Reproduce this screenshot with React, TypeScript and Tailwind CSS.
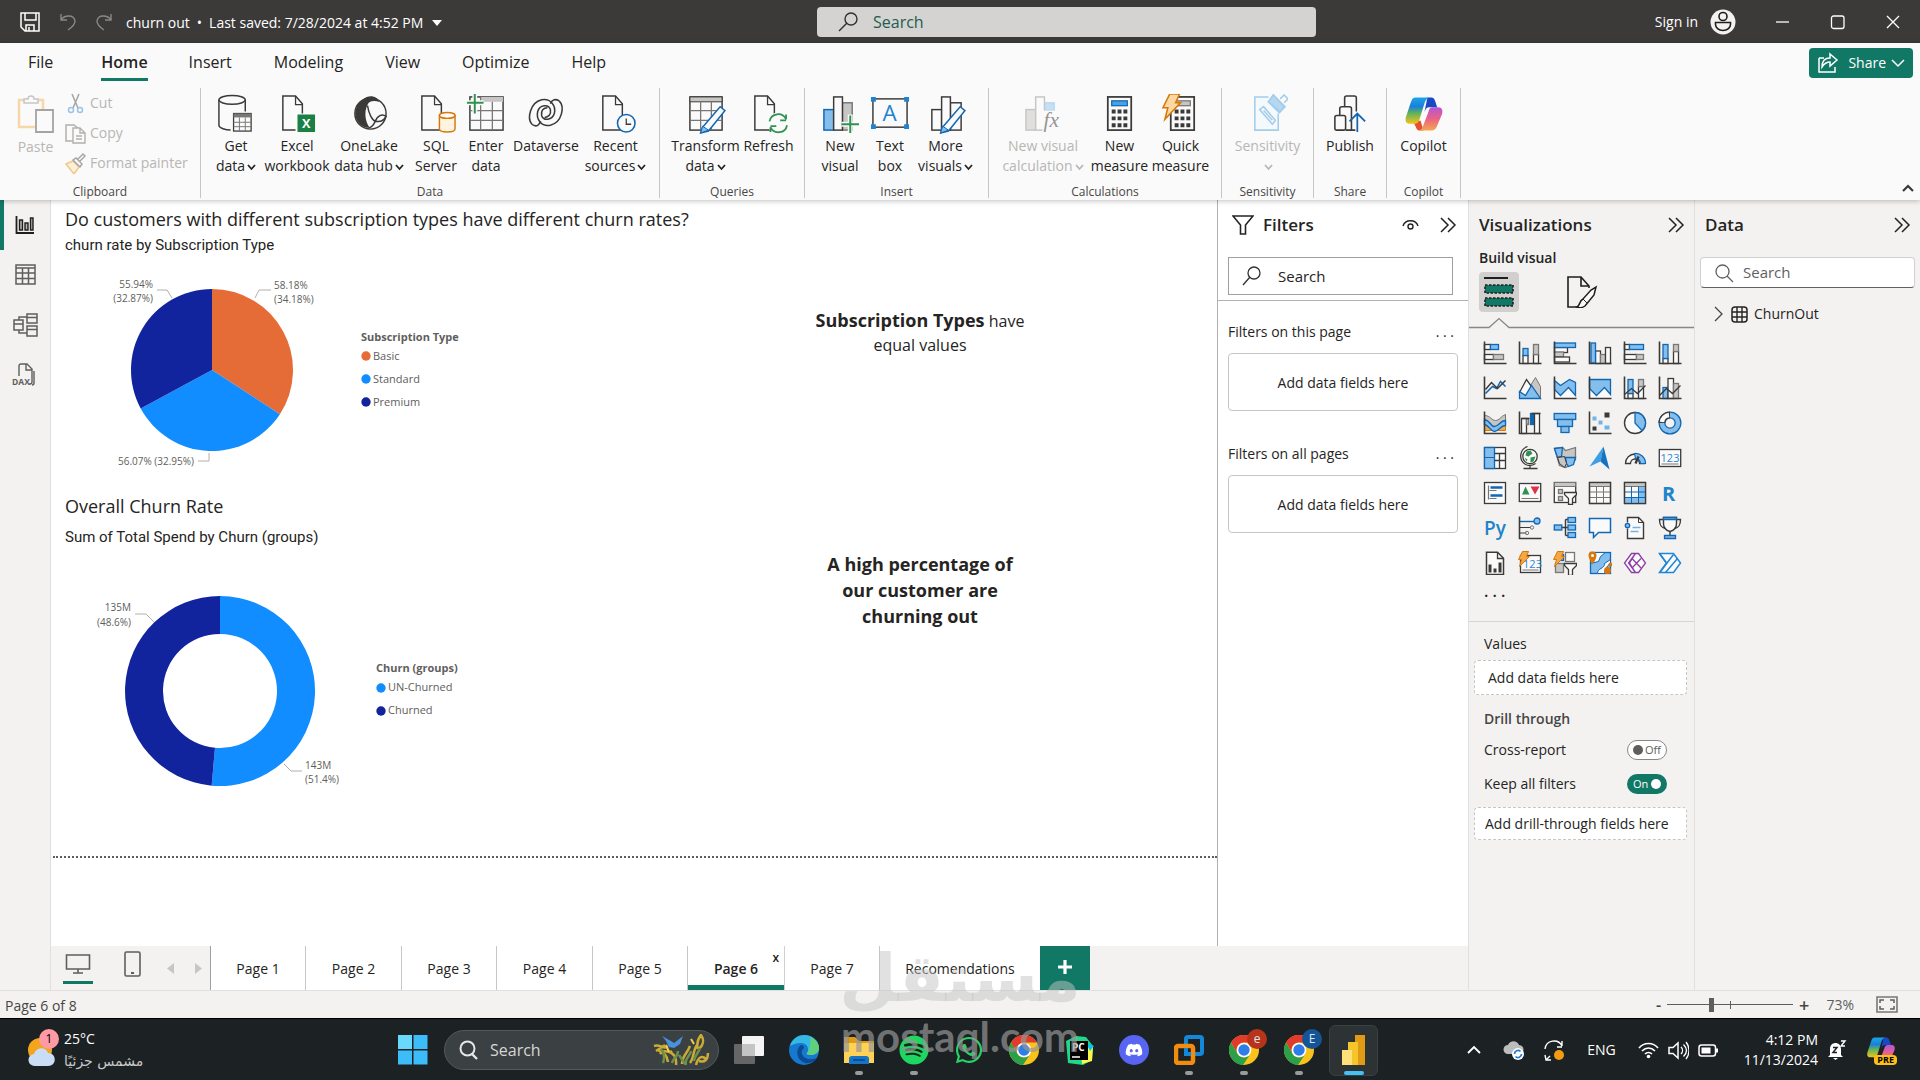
import React from "react";
import { FaWhatsapp, FaDiscord, FaSpotify } from "react-icons/fa";

const D = "#3b3a39";
const B = "#1267b4";
const L = "#83beec";
const G = "#c8c6c4";
const S = "#797775";
const W = "#fafafa";
const GR = "#2f9250";
const OR = "#d8780a";

type IconProps = { size?: number; w?: number; h?: number; box: string; children: React.ReactNode; className?: string };

function Icon({ size = 24, w, h, box, children, className = "" }: IconProps) {
  return (
    <svg width={w ?? size} height={h ?? size} viewBox={box} fill="none" aria-hidden="true" className={`block shrink-0 ${className}`}>
      {children}
    </svg>
  );
}

function Box({ x, y, w, h, f = W, s = D, t = 1.3 }: { x: number; y: number; w: number; h: number; f?: string; s?: string; t?: number }) {
  return <rect x={x} y={y} width={w} height={h} fill={f} stroke={s} strokeWidth={t} />;
}

const axes = <path d="M1 0v22h22" stroke={D} strokeWidth="1.6" />;

/* ---------- Visual gallery ---------- */

const visuals: { name: string; art: React.ReactNode }[] = [
  { name: "Stacked bar chart", art: <><Box x={1} y={3} w={6} h={5} /><Box x={7} y={3} w={8} h={5} f={L} s={B} /><Box x={1} y={13} w={9} h={5} /><Box x={10} y={13} w={10} h={5} f={G} s={S} />{axes}</> },
  { name: "Stacked column chart", art: <><Box x={4.5} y={14} w={5} h={8} /><Box x={4.5} y={7} w={5} h={7} f={L} s={B} /><Box x={15} y={13} w={5} h={9} /><Box x={15} y={3} w={5} h={10} f={G} s={S} />{axes}</> },
  { name: "Clustered bar chart", art: <><Box x={1} y={6} w={13} h={5} /><Box x={1} y={10.5} w={9} h={5} f={G} s={S} /><Box x={1} y={15.5} w={15} h={5} /><Box x={1} y={1.5} w={21} h={4.5} f={L} s={B} />{axes}</> },
  { name: "Clustered column chart", art: <><Box x={7} y={9.5} w={5} h={12.5} /><Box x={12} y={13} w={5} h={9} f={G} s={S} /><Box x={17} y={6} w={5} h={16} /><Box x={2.5} y={1.5} w={4.5} h={20} f={L} s={B} />{axes}</> },
  { name: "100% stacked bar chart", art: <><Box x={1} y={3} w={5} h={5} /><Box x={6} y={3} w={14} h={5} f={L} s={B} /><Box x={1} y={13} w={12} h={5} /><Box x={13} y={13} w={7} h={5} f={G} s={S} />{axes}</> },
  { name: "100% stacked column chart", art: <><Box x={4.5} y={17} w={5} h={5} /><Box x={4.5} y={3} w={5} h={14} f={L} s={B} /><Box x={15} y={10} w={5} h={12} /><Box x={15} y={3} w={5} h={7} f={G} s={S} />{axes}</> },
  { name: "Line chart", art: <><path d="M2 17 9 10l4 2 4-7 5 5" stroke={B} strokeWidth="1.5" /><path d="M2 13 8 6l6 6 8-8" stroke={D} strokeWidth="1.5" />{axes}</> },
  { name: "Area chart", art: <><path d="m12 9 5-8 5 9v12h-6z" fill={G} stroke={S} /><path d="m1 16 7-13 5 7-6 10z" fill={W} stroke={D} strokeWidth="1.3" /><path d="M1 15v7h21L13 9 7 19z" fill={L} stroke={B} strokeWidth="1.3" /></> },
  { name: "Stacked area chart", art: <><path d="M1 22v-9l6 6 8-8 7 8v3z" fill={W} /><path d="M1 4l6 5 9-6 6 3v13l-7-8-8 8-6-6z" fill={L} stroke={B} strokeWidth="1.3" />{axes}</> },
  { name: "100% stacked area chart", art: <><path d="M1 22v-9l6 6 8-8 7 8v3z" fill={W} /><path d="M1 3h21v15l-6-7-8 8-7-7z" fill={L} stroke={B} strokeWidth="1.3" />{axes}</> },
  { name: "Line and stacked column chart", art: <><Box x={4.5} y={17} w={5} h={5} /><Box x={4.5} y={3} w={5} h={14} f={L} s={B} /><Box x={15} y={10} w={5} h={12} /><Box x={15} y={3} w={5} h={7} f={G} s={S} /><path d="m1 18 7-6 6 5 8-8" stroke={D} strokeWidth="1.3" />{axes}</> },
  { name: "Line and clustered column chart", art: <><Box x={4.5} y={11} w={5} h={11} f={L} s={B} /><Box x={9.5} y={2} w={5.5} h={20} /><Box x={15} y={7} w={5} h={15} f={G} s={S} /><path d="m1 19 7-7 6 5 8-8" stroke={D} strokeWidth="1.3" />{axes}</> },
  { name: "Ribbon chart", art: <><path d="M1 13h21v6H1z" fill="#f3a845" stroke={OR} /><path d="M1 4c6 0 7 5 11 5s5-4 10-6v6c-5 1-6 7-10 7S6 9 1 8z" fill={G} stroke={S} /><path d="M1 8c6 1 6 7 10 7s6-6 11-6v5c-5 0-7 6-11 6S6 14 1 13z" fill={L} stroke={B} strokeWidth="1.4" />{axes}</> },
  { name: "Waterfall chart", art: <><Box x={3} y={7} w={5} h={15} /><Box x={8} y={7} w={2} h={6} f={G} s={S} /><Box x={12} y={2} w={3} h={11} f={B} s={B} /><Box x={16} y={2} w={5} h={20} /><path d="M3 7h8M13 2h9" stroke={D} strokeWidth="1.3" />{axes}</> },
  { name: "Funnel", art: <><Box x={0.7} y={2} w={21.5} h={6} f={L} s={B} /><Box x={4} y={8} w={15} h={7} f={L} s={B} /><Box x={7.5} y={15} w={8} h={6} f={L} s={B} /></> },
  { name: "Scatter chart", art: <><path d="M16 1h5v5h-5zM4 15h4v4H4z" fill={D} /><path d="M4 5h4v4H4zM10 9h4v4h-4zM16 14h5v4h-5z" fill="#73b4e8" />{axes}</> },
  { name: "Pie chart", art: <><circle cx="11.5" cy="11.5" r="10.5" fill={W} stroke={D} strokeWidth="1.4" /><path d="M11.5 1a10.5 10.5 0 0 1 7 18.2l-7-7.7z" fill={L} stroke={B} strokeWidth="1.3" /></> },
  { name: "Donut chart", art: <><circle cx="11.5" cy="11.5" r="8" stroke={B} strokeWidth="7" /><circle cx="11.5" cy="11.5" r="8" stroke={L} strokeWidth="4.4" /><path d="M3.5 11.5a8 8 0 0 1 8-8" stroke={D} strokeWidth="7" /><path d="M3.5 10.5a8 8 0 0 1 7-7" stroke={W} strokeWidth="4.4" /></> },
  { name: "Treemap", art: <><Box x={1} y={1} w={21} h={21} /><Box x={1} y={1} w={10} h={21} f={L} s={B} /><path d="M1 11h10" stroke={B} /><path d="M11 7h11M16 7v15M11 14h11" stroke={D} strokeWidth="1.3" /></> },
  { name: "Map", art: <><circle cx="11.5" cy="10" r="7.2" fill={W} stroke={D} strokeWidth="1.3" /><path d="m8 5 4-1 2 3-4 3-3-1zM12 11l5-1-2 5-3 1zM6 11l3 2-1 2z" fill={GR} /><path d="M9 0a10 10 0 0 0-2 18 10 10 0 0 0 10-1M11.5 19v3M5 22h14" stroke={D} strokeWidth="1.3" /></> },
  { name: "Filled map", art: <><path d="m1 2 8-1 3 3 10-3v12l-4 5-6 3-6-2-2-7z" fill={G} stroke={S} strokeWidth="1.3" /><path d="m1 2 8-1-1 9-4 1zM12 11h10l-2 7-5 2-2-3z" fill={L} stroke={B} strokeWidth="1.3" /><path d="m4 11 2 6 5 4 2-4-2-7z" fill={G} stroke={D} /></> },
  { name: "Azure map", art: <><path d="M15 0 1 20l11-5z" fill="#3c9fe6" /><path d="m15 0 6 23-9-8z" fill="#1572c0" /></> },
  { name: "Gauge", art: <><path d="M2 17a9.5 9.5 0 0 1 19 0h-5a4.500 4.500 0 0 0-9 0z" fill={W} stroke={D} strokeWidth="1.3" /><path d="M11 7a10 10 0 0 1 11 10h-5a5 5 0 0 0-5-5z" fill={L} stroke={B} strokeWidth="1.2" /><path d="m15 10-3 7" stroke={D} strokeWidth="2.4" /></> },
  { name: "Card", art: <><Box x={0.8} y={3} w={21.4} h={17} /><path d="M3 17.500h17" stroke={S} /><text x="11.5" y="15" textAnchor="middle" fontSize="11" fill="#2f86d2" fontFamily="Open Sans">123</text></> },
  { name: "Multi-row card", art: <><Box x={1} y={1} w={21} h={21} /><path d="M5 4v14M6 9h7M6 17h7" stroke={S} strokeWidth="1.2" /><path d="M7 6h12M7 14h12" stroke={B} strokeWidth="2.4" /></> },
  { name: "KPI", art: <><Box x={0.8} y={2} w={21.400} h={18} /><path d="M3 17h17" stroke={S} /><path d="m3.500 13 3.500-8 4 8z" fill={GR} /><path d="M12 5h9l-4.500 8z" fill="#dc3545" /></> },
  { name: "Slicer", art: <><Box x={0.8} y={1} w={21.400} h={20} /><path d="M1 1h21v4H1z" fill={G} stroke={S} /><Box x={5} y={8} w={4} h={4} f={G} s={S} /><Box x={5} y={15} w={4} h={4} f={G} s={S} /><path d="M11 11h12v2l-4 4v6h-4v-6l-4-4z" fill={W} stroke={D} strokeWidth="1.3" /></> },
  { name: "Table", art: <><Box x={1} y={1} w={21} h={21} /><path d="M1 1h21v4H1z" fill={G} stroke={S} /><path d="M1 10.500h21M1 16h21M8 5v17M15 5v17" stroke={S} /><Box x={1} y={1} w={21} h={21} f="none" /></> },
  { name: "Matrix", art: <><Box x={1} y={1} w={21} h={21} /><path d="M15 5h7v17H1v-6h14z" fill={L} /><path d="M1 1h21v4H1z" fill={G} stroke={S} /><path d="M1 10.500h21M1 16h21M8 5v17M15 5v17" stroke={B} /><Box x={1} y={1} w={21} h={21} f="none" /></> },
  { name: "R script visual", art: <text x="10" y="19" textAnchor="middle" fontSize="20" fontWeight="700" fill="#2183c9" fontFamily="Open Sans">R</text> },
  { name: "Python visual", art: <text x="11.5" y="18" textAnchor="middle" fontSize="19" fontWeight="600" fill="#2183c9" fontFamily="Open Sans">Py</text> },
  { name: "Key influencers", art: <><path d="M1 5h16" stroke={B} strokeWidth="1.4" /><circle cx="18.500" cy="4.500" r="3" fill={L} stroke={B} strokeWidth="1.3" /><path d="M1 11h11M1 16.500h7" stroke={D} strokeWidth="1.2" /><circle cx="13.500" cy="11" r="1.700" stroke={S} /><circle cx="8.500" cy="16.500" r="1.700" stroke={S} />{axes}</> },
  { name: "Decomposition tree", art: <><path d="M8 11h7M12 3v16M12 3h3M12 19h3" stroke={D} strokeWidth="1.4" /><Box x={0.8} y={8.500} w={7.500} h={5} f={L} s={B} /><Box x={14.500} y={1} w={7.500} h={5} f={L} s={B} /><Box x={14.500} y={8.500} w={7.500} h={5} f={L} s={B} /><Box x={14.500} y={16} w={7.500} h={5} f={L} s={B} /></> },
  { name: "Q&A", art: <path d="M1 2h21v14H10l-5 5v-5H1z" fill={W} stroke={B} strokeWidth="1.5" /> },
  { name: "Smart narrative", art: <><path d="M4 6V1h11l5 5v16H4V12" fill={W} stroke={D} strokeWidth="1.4" /><path d="M15 1v5h5" stroke={D} /><circle cx="4" cy="9" r="2.200" fill={L} stroke={B} strokeWidth="1.3" /><path d="M9 11h8M7 15h8" stroke="#73b4e8" strokeWidth="1.6" /></> },
  { name: "Goals", art: <><path d="M5 1h13v6c0 5-3 7-6.500 8C8 14 5 12 5 7z" fill={W} stroke={D} strokeWidth="1.4" /><path d="M5 3H1c0 5 1 8 6 9M18 3h4c0 5-1 8-6 9M11.500 15v4" stroke={D} strokeWidth="1.4" /><path d="M5 1h13v2H5zM6 19h11v3H6z" fill={L} stroke={B} strokeWidth="1.3" /></> },
  { name: "Paginated report", art: <><path d="M3 0.800h11l6 6V23H3z" fill={W} stroke={D} strokeWidth="1.5" /><path d="M14 1v6h6" stroke={D} strokeWidth="1.300" /><path d="M5 13h3v8H5zM10 17h3v4h-3zM15 11h3v10h-3z" fill={D} /></> },
  { name: "Card (new)", art: <><Box x={2} y={4} w={20} h={17} /><path d="M4 18.500h16" stroke={S} /><text x="14" y="16" textAnchor="middle" fontSize="11" fill="#2f86d2" fontFamily="Open Sans">123</text><path d="M4 0h6L8 5h3L1 15l2-7H0z" fill="#f3a845" stroke={OR} /></> },
  { name: "Slicer (new)", art: <><Box x={12} y={1} w={9} h={9} s={S} /><Box x={2} y={12} w={8} h={9} s={S} f={G} /><Box x={6} y={3} w={4} h={6} s={B} f={L} /><path d="M4 0h6L8 5h3L1 15l2-7H0z" fill="#f3a845" stroke={OR} /><path d="M11 12h12v2l-4 4v6h-4v-6l-4-4z" fill={W} stroke={D} strokeWidth="1.3" /></> },
  { name: "ArcGIS Maps", art: <><Box x={2} y={1} w={20} h={21} f={L} s={B} /><path d="M2 22V12l8-2 2-5 5-4H2zM9 22c0-6 7-4 7-10l6-4v4c-4 2-6 8-6 10z" fill={W} stroke={B} /><path d="M0 4a4 4 0 0 1 8 0c0 3-4 9-4 9S0 7 0 4z" fill={OR} /><circle cx="4" cy="4" r="1.500" fill={W} /><circle cx="19" cy="19" r="3.500" fill={OR} /><circle cx="22" cy="13" r="2" fill={OR} /></> },
  { name: "Power Apps", art: <g stroke="#8d3fa5" strokeWidth="1.300"><path d="M8 2h4l-6 9.500 6 9.500H8l-7-9.500zM15 2h-3L5 11.500 12 21h3l7-9.500z" fill={W} /><path d="m8.500 7 9 9.500M17.500 7l-9 9.500" /></g> },
  { name: "Power Automate", art: <g stroke="#1d86d6" strokeWidth="1.500"><path d="M1 2h14l7 9.500L15 21H1l7-9.500z" fill={W} /><path d="M7 21 19 7M1 2l7 9.500M2 20 15 3" /></g> },
];

/* ---------- Ribbon icons ---------- */

const sheet = (x: number) => <path d={`M${x} 2h13l7 8v27H${x}z`} fill={W} stroke={D} strokeWidth="1.500" />;
const fold = (x: number) => <path d={`M${x + 13} 2v9h7`} stroke={D} strokeWidth="1.300" />;
const pencil = (
  <g>
    <path d="m14 34 18-21 5 4-17 21-8 2z" fill={W} stroke={B} strokeWidth="1.500" />
    <path d="m14 33 6 4-8 3z" fill={L} stroke={B} />
  </g>
);

const art: Record<string, React.ReactNode> = {
  getdata: <><path d="M3 6v26c0 3 7 5 12 5M30 6v12" stroke={D} strokeWidth="1.500" /><ellipse cx="16.500" cy="6" rx="13.500" ry="4.500" fill={W} stroke={D} strokeWidth="1.500" /><Box x={18} y={20} w={18} h={18} /><path d="M18 20h18v4H18z" fill={S} /><path d="M18 29h18M18 33.500h18M24 24v14M30 24v14" stroke={S} /></>,
  excel: <>{sheet(6)}{fold(6)}<rect x="19" y="20" width="20" height="20" fill="#fff" /><rect x="21" y="21" width="18" height="18" fill="#1a8045" /><text x="30" y="35" textAnchor="middle" fontSize="13" fontWeight="700" fill="#fff" fontFamily="Open Sans">X</text></>,
  onelake: <><circle cx="22" cy="20" r="16" stroke={D} strokeWidth="1.500" fill={W} /><path d="M14 6C20 0 29 2 31 8c-7-2-11 0-12 3-4 8-2 18 2 23-8 3-17-9-14-18 1-5 4-8 7-10z" fill={D} /><path d="M19 12c1 8 5 15 8 16 5 1 9-1 11-5-4-3-9-1-11 5-2 4-5 7-8 7" stroke={D} strokeWidth="1.500" /></>,
  sql: <>{sheet(6)}{fold(6)}<path d="M24 22v14c0 2 3 3 8 3s8-1 8-3V22z" fill="#fff4e0" stroke={OR} strokeWidth="1.500" /><ellipse cx="32" cy="22" rx="8" ry="3" fill={W} stroke={OR} strokeWidth="1.500" /></>,
  enter: <><Box x={4} y={3} w={34} h={34} t={1.500} /><path d="M15 3h23v5H15z" fill={G} /><path d="M4 17h34M4 27h34M15 3v34M27 8v29" stroke={S} strokeWidth="1.300" /><path d="M9 0v18M0 9h18" stroke={W} strokeWidth="5" /><path d="M9 0v20M1 9h17" stroke={GR} strokeWidth="2" /></>,
  dataverse: <g stroke={D} strokeWidth="1.600"><path d="M6 31C1 25 4 9 16 6c9-2 15 6 13 14-2 7-11 8-13 2-1-5 2-8 6-8" /><path d="M34 7c6 6 3 22-9 25-9 2-15-6-13-14 2-7 11-8 13-2 1 5-2 8-6 8" /><path d="M6 31c5 4 8 0 9-3M34 7c-5-3-8 0-9 3" /></g>,
  recent: <>{sheet(7)}{fold(7)}<circle cx="31" cy="30" r="9" fill={W} stroke={B} strokeWidth="1.600" /><path d="M31 25v6h5" stroke={D} strokeWidth="1.300" /></>,
  transform: <><Box x={4} y={3} w={33} h={34} t={1.500} /><path d="M4 3h33v5H4z" fill={G} stroke={D} /><path d="M4 17h33M4 27h33M15 8v29M26 8v29" stroke={S} strokeWidth="1.300" /><g transform="translate(3 0)">{pencil}</g></>,
  refresh: <>{sheet(6)}{fold(6)}<circle cx="30" cy="30" r="11" fill={W} /><path d="M21 28a9 9 0 0 1 17-2v-5m0 6h-6M39 32a9 9 0 0 1-17 2v5m0-6h6" stroke={GR} strokeWidth="1.800" /></>,
  newvisual: <><Box x={4} y={16} w={10} h={21} f={L} s={B} t={1.500} /><Box x={23} y={9} w={10} h={28} f={G} s={S} t={1.500} /><Box x={14} y={3} w={9} h={34} t={1.500} /><path d="M31 21v20M22 31h20" stroke={W} strokeWidth="5" /><path d="M31 22v18M22 31h18" stroke={GR} strokeWidth="2" /></>,
  textbox: <><Box x={3} y={5} w={35} h={29} t={1.500} /><path d="M1 3h5v5H1zM35 3h5v5h-5zM1 31h5v5H1zM35 31h5v5h-5z" fill="#1f83d3" /><text x="20" y="28" textAnchor="middle" fontSize="23" fill="#1f83d3" fontFamily="Open Sans">A</text></>,
  more: <><g transform="translate(3 0)"><Box x={3} y={16} w={10} h={21} t={1.500} /><Box x={22} y={9} w={11} h={28} t={1.500} /><Box x={13} y={3} w={9} h={34} t={1.500} />{pencil}</g></>,
  newcalc: <><Box x={3} y={16} w={10} h={21} f="#e1dfdd" s={G} t={1.500} /><Box x={22} y={9} w={10} h={8} f="#c5e0f5" s="#b5d5ee" /><Box x={13} y={3} w={9} h={34} s={G} t={1.500} /><rect x="20" y="17" width="18" height="22" fill={W} /><text x="29" y="34" textAnchor="middle" fontSize="22" fontStyle="italic" fill="#979593" fontFamily="Liberation Serif">fx</text></>,
  measure: <><Box x={8} y={3} w={24} h={34} t={1.800} /><Box x={12} y={7} w={16} h={5} f="#4ba0e4" s={B} /><path d="M12 16h4v4h-4zM18 16h4v4h-4zM24 16h4v4h-4zM12 23h4v4h-4zM18 23h4v4h-4zM24 23h4v4h-4zM12 30h4v4h-4zM18 30h4v4h-4zM24 30h4v4h-4z" fill={D} /></>,
  quick: <><Box x={10} y={3} w={24} h={34} t={1.800} /><Box x={14} y={7} w={16} h={5} f={G} s={S} /><path d="M14 16h4v4h-4zM20 16h4v4h-4zM26 16h4v4h-4zM14 23h4v4h-4zM20 23h4v4h-4zM26 23h4v4h-4zM14 30h4v4h-4zM20 30h4v4h-4zM26 30h4v4h-4z" fill={D} /><path d="M9 0h10l-4 9h5L4 26l3-12H2z" fill="#fbd9a0" stroke={OR} strokeWidth="1.600" /></>,
  sensitivity: <g stroke="#a5cdea" strokeWidth="1.600"><path d="M31 20v17H7V3h14" fill="#f3f9fd" /><path d="m12 16 4-3 12 14-3 4zM16 17l9 10M21 8l5-7 12 12-6 6z" fill={W} /><path d="m26 1 11 12-4 5L21 8z" fill="#b5d8f2" /><path d="m33 5 4-4 4 4-4 4" fill={W} /></g>,
  publish: <><g stroke={D} strokeWidth="1.600"><rect x="5" y="22" width="11" height="15" rx="2" fill={W} /><path d="M10 22v-7q0-2 2-2h8q2 0 2 2v22M15 13V4q0-2 2-2h8q2 0 2 2v14M16 37h10" /></g><path d="M28 39V21M20 28l8-8 8 8" stroke={B} strokeWidth="1.800" /></>,
};

function CopilotArt({ id }: { id: string }) {
  return (
    <>
      <defs>
        <linearGradient id={`${id}a`} x1="0" y1="0" x2="0" y2="1"><stop offset="0" stopColor="#1ca4ec" /><stop offset=".35" stopColor="#1b7fd8" /><stop offset=".6" stopColor="#5fb45a" /><stop offset="1" stopColor="#f6c21c" /></linearGradient>
        <linearGradient id={`${id}b`} x1="0" y1="0" x2="0" y2="1"><stop offset="0" stopColor="#b455d6" /><stop offset=".5" stopColor="#ea6385" /><stop offset="1" stopColor="#f3a74e" /></linearGradient>
      </defs>
      <path d="M24 3h4c2 0 3 1 4 4l2 6h-8c-3 0-4 2-5 5z" fill="#1a49c4" />
      <path d="M9 27h8l3 10h-3c-3 0-4-1-5-4z" fill="#e6502f" />
      <path d="M12 3h14c-3 1-4 3-5 6l-5 16c-1 4-3 5-6 5H6c-4 0-5-3-4-7L7 8c1-3 2-5 5-5z" fill={`url(#${id}a)`} />
      <path d="M30 13h5c4 0 5 3 4 7l-5 12c-1 3-3 5-6 5H15c3-1 4-3 5-6l5-13c1-4 2-5 5-5z" fill={`url(#${id}b)`} />
    </>
  );
}

function Caret({ className = "" }: { className?: string }) {
  return (
    <svg width="9" height="8" viewBox="0 0 9 8" fill="none" className={`ml-0.5 inline-block ${className}`} aria-hidden="true">
      <path d="m1 2 3.500 4L8 2" stroke="currentColor" strokeWidth="1.800" />
    </svg>
  );
}

type Tool = { icon: string; l1: string; l2?: string; caret?: boolean; width: string; off?: boolean };
const groups: { label: string; pad: string; tools: Tool[] }[] = [
  {
    label: "Data", pad: "pl-[7px] pr-[12px]", tools: [
      { icon: "getdata", l1: "Get", l2: "data", caret: true, width: "w-[56px]" },
      { icon: "excel", l1: "Excel", l2: "workbook", width: "w-[66px]" },
      { icon: "onelake", l1: "OneLake", l2: "data hub", caret: true, width: "w-[78px]" },
      { icon: "sql", l1: "SQL", l2: "Server", width: "w-[56px]" },
      { icon: "enter", l1: "Enter", l2: "data", width: "w-[44px]" },
      { icon: "dataverse", l1: "Dataverse", width: "w-[76px]" },
      { icon: "recent", l1: "Recent", l2: "sources", caret: true, width: "w-[63px]" },
    ],
  },
  {
    label: "Queries", pad: "pl-[11px] pr-[7px]", tools: [
      { icon: "transform", l1: "Transform", l2: "data", caret: true, width: "w-[69px]" },
      { icon: "refresh", l1: "Refresh", width: "w-[57px]" },
    ],
  },
  {
    label: "Insert", pad: "pl-[10px] pr-[12px]", tools: [
      { icon: "newvisual", l1: "New", l2: "visual", width: "w-[50px]" },
      { icon: "textbox", l1: "Text", l2: "box", width: "w-[50px]" },
      { icon: "more", l1: "More", l2: "visuals", caret: true, width: "w-[61px]" },
    ],
  },
  {
    label: "Calculations", pad: "pl-[8px] pr-[10px]", tools: [
      { icon: "newcalc", l1: "New visual", l2: "calculation", caret: true, width: "w-[92px]", off: true },
      { icon: "measure", l1: "New", l2: "measure", width: "w-[61px]" },
      { icon: "quick", l1: "Quick", l2: "measure", width: "w-[61px]" },
    ],
  },
  { label: "Sensitivity", pad: "px-[8px]", tools: [{ icon: "sensitivity", l1: "Sensitivity", l2: "", caret: true, width: "w-[75px]", off: true }] },
  { label: "Share", pad: "px-[8px]", tools: [{ icon: "publish", l1: "Publish", width: "w-[56px]" }] },
  { label: "Copilot", pad: "px-[8px]", tools: [{ icon: "copilot", l1: "Copilot", width: "w-[57px]" }] },
];

function GroupLine() {
  return <div className="mt-1 mb-0.5 w-px shrink-0 bg-[#c8c6c4]" />;
}

function GroupLabel({ children }: { children: React.ReactNode }) {
  return <div className="mt-[6px] text-center text-xs leading-4 text-[#484644]">{children}</div>;
}

function TitleBar() {
  return (
    <header className="flex h-[43px] shrink-0 items-center bg-[#3b3a39] text-white">
      <div className="flex w-[817px] shrink items-center pl-[19px]">
        <button aria-label="Save">
          <Icon size={22} box="0 0 22 22"><path d="M2 2h18v18H6l-4-4zM6 2v7h11V2M7 20v-6h8v6M10 16v4" stroke="#fff" strokeWidth="1.500" /></Icon>
        </button>
        <button aria-label="Undo" className="ml-[18px]">
          <Icon size={18} box="0 0 18 18"><path d="M2 1v6h6M2 7c3-5 13-6 14 1 0 4-4 7-7 9" stroke="#8a8886" strokeWidth="1.400" /></Icon>
        </button>
        <button aria-label="Redo" className="ml-[18px]">
          <Icon size={18} box="0 0 18 18"><path d="M16 1v6h-6M16 7C13 2 3 1 2 8c0 4 4 7 7 9" stroke="#8a8886" strokeWidth="1.400" /></Icon>
        </button>
        <button className="ml-[13px] flex items-center gap-[7px] pt-[3px] text-sm whitespace-nowrap">
          <span>churn out</span><span>•</span><span>Last saved: 7/28/2024 at 4:52 PM</span>
          <Icon w={10} h={6} box="0 0 10 6" className="ml-[2px]"><path d="M0 0h10L5 6z" fill="#fff" /></Icon>
        </button>
      </div>
      <label className="flex h-[30px] w-[26%] items-center rounded-sm bg-[#d4d3d1] pl-[20px]">
        <Icon size={22} box="0 0 22 22"><circle cx="14" cy="8" r="6" stroke="#323130" strokeWidth="1.400" /><path d="m10 12-8 8" stroke="#323130" strokeWidth="1.400" /></Icon>
        <input aria-label="Search" placeholder="Search" className="ml-[14px] min-w-0 flex-1 bg-transparent text-base text-[#245c4d] outline-none placeholder:text-[#245c4d]" />
      </label>
      <div className="flex flex-1 items-center justify-end pr-[19px]">
        <button className="flex items-center gap-[12px] text-sm">
          Sign in
          <Icon size={26} box="0 0 26 26"><circle cx="13" cy="13" r="12.500" fill="#f3f2f1" /><circle cx="13" cy="7.500" r="4" stroke="#201f1e" strokeWidth="1.600" /><path d="M5.500 13.500h15v2c0 3-3 6-7.500 6s-7.500-3-7.500-6z" stroke="#201f1e" strokeWidth="1.600" /></Icon>
        </button>
        <button aria-label="Minimize" className="ml-[39px]"><Icon size={16} box="0 0 16 16"><path d="M1 8h13" stroke="#fff" strokeWidth="1.300" /></Icon></button>
        <button aria-label="Restore" className="ml-[39px]"><Icon size={16} box="0 0 16 16"><rect x="1.500" y="2" width="12.500" height="12.500" rx="2" stroke="#fff" strokeWidth="1.300" /></Icon></button>
        <button aria-label="Close" className="ml-[39px]"><Icon size={16} box="0 0 16 16"><path d="m2 2 12 12M14 2 2 14" stroke="#fff" strokeWidth="1.300" /></Icon></button>
      </div>
    </header>
  );
}

function Ribbon() {
  const menu = ["File", "Home", "Insert", "Modeling", "View", "Optimize", "Help"];
  return (
    <section className="relative z-10 shrink-0 bg-[#fafafa] shadow-[0_1px_5px_rgba(0,0,0,0.25)]">
      <div className="flex h-[41px] items-start justify-between pr-[7px] pl-[28px]">
        <nav className="flex">
          {menu.map((m) => (
            <button
              key={m}
              className={
                m === "Home"
                  ? "mr-[41px] h-[38px] border-b-[3px] border-[#117865] pt-[3px] text-base font-semibold text-[#252423]"
                  : m === "File"
                  ? "mr-[48px] h-[38px] text-base text-[#252423]"
                  : "mr-[42px] h-[38px] text-base text-[#252423]"
              }
            >
              {m}
            </button>
          ))}
        </nav>
        <button className="mt-[5px] flex h-[30px] items-center rounded bg-[#117865] px-[8px] text-sm text-white">
          <Icon size={22} box="0 0 22 22"><path d="M2 6v14h16v-5M2 6h5" stroke="#fff" strokeWidth="1.500" /><path d="m13 2 7 6-7 6v-4c-4 0-6 2-8 5 0-6 3-9 8-9z" stroke="#fff" strokeWidth="1.500" /></Icon>
          <span className="ml-[9px]">Share</span>
          <Icon w={14} h={14} box="0 0 14 14" className="ml-[5px]"><path d="m1 4 6 6 6-6" stroke="#fff" strokeWidth="1.500" /></Icon>
        </button>
      </div>
      <div className="flex">
        <div className="flex w-[200px] shrink-0 flex-col pt-[10px]">
          <div className="flex h-[84px] text-sm text-[#b8b6b4]">
            <button className="flex w-[57px] shrink-0 flex-col items-center pl-[14px]" disabled>
              <Icon size={40} box="0 0 40 40"><path d="M3 6h24v27H3z" fill={W} stroke="#f6d7a8" strokeWidth="2.500" /><path d="M8 9V5h4c0-4 6-4 6 0h4v4H8z" fill={W} stroke={G} strokeWidth="1.500" /><path d="M20 16h17v22H20z" fill={W} stroke="#a6a4a2" strokeWidth="1.800" /></Icon>
              <span className="mt-0.5 leading-[21px]">Paste</span>
            </button>
            <div className="ml-[8px] flex flex-col gap-[12px]">
              <button className="flex h-[18px] items-center gap-[4px]" disabled>
                <Icon size={21} box="0 0 21 21"><path d="m7 1 6 14M14 1 8 15" stroke="#a6a4a2" strokeWidth="1.500" /><circle cx="6" cy="17" r="2.500" stroke="#9bc3e6" strokeWidth="1.500" /><circle cx="15" cy="17" r="2.500" stroke="#9bc3e6" strokeWidth="1.500" /></Icon>Cut
              </button>
              <button className="flex h-[18px] items-center gap-[4px]" disabled>
                <Icon size={21} box="0 0 21 21"><path d="M8 18H1V2h8l4 3" stroke="#b3b0ad" strokeWidth="1.500" /><path d="M8 5h7l5 5v10H8zM15 5v5h5M11 13h6M11 16h6" fill={W} stroke="#b3b0ad" strokeWidth="1.400" /></Icon>Copy
              </button>
              <button className="flex h-[18px] items-center gap-[4px] whitespace-nowrap" disabled>
                <Icon size={21} box="0 0 21 21"><path d="m1 11 7-3 6 6-5 7z" fill="#fdf0d9" stroke="#efc88e" strokeWidth="1.500" /><path d="m8 7 3-2 6 6-2 3zM13 6l5-5 2 2-5 5" fill={W} stroke="#a6a4a2" strokeWidth="1.400" /></Icon>Format painter
              </button>
            </div>
          </div>
          <GroupLabel>Clipboard</GroupLabel>
        </div>
        {groups.map((g) => (
          <React.Fragment key={g.label}>
            <GroupLine />
            <div className="flex shrink-0 flex-col pt-[10px]">
              <div className={`flex h-[84px] ${g.pad}`}>
                {g.tools.map((t) => (
                  <button
                    key={t.icon}
                    disabled={t.off}
                    className={`${t.width} flex flex-col items-center text-sm leading-5 whitespace-nowrap ${t.off ? "text-[#b8b6b4]" : "text-[#252423]"}`}
                  >
                    <Icon size={40} box={t.icon === "copilot" ? "0 0 41 40" : "0 0 41 41"}>
                      {t.icon === "copilot" ? <CopilotArt id="rb" /> : art[t.icon]}
                    </Icon>
                    <span className="mt-0.5">{t.l1}</span>
                    {(t.l2 !== undefined || t.caret) && <span>{t.l2}{t.caret && <Caret />}</span>}
                  </button>
                ))}
              </div>
              <GroupLabel>{g.label}</GroupLabel>
            </div>
          </React.Fragment>
        ))}
        <GroupLine />
        <button aria-label="Collapse ribbon" className="mr-[5px] ml-auto self-end pb-[7px]">
          <Icon w={14} h={9} box="0 0 14 9"><path d="m2 7 5-5 5 5" stroke={D} strokeWidth="2.200" /></Icon>
        </button>
      </div>
    </section>
  );
}

function Rail() {
  const g = "#605e5c";
  return (
    <nav className="flex w-[51px] shrink-0 flex-col border-r border-[#e1dfdd] bg-[#f3f2f1]">
      <button aria-label="Report view" className="flex h-[50px] items-center border-l-4 border-[#117865] pl-[11px]">
        <Icon size={20} box="0 0 20 20"><path d="M1.500 1v17H19" stroke="#201f1e" strokeWidth="1.800" /><path d="M4.500 5h3v10h-3zM10 8h3v7h-3zM15.500 3h2.500v12h-2.500z" fill="#b3b0ad" stroke="#201f1e" strokeWidth="1.400" /></Icon>
      </button>
      <button aria-label="Table view" className="flex h-[48px] items-center pl-[15px]">
        <Icon size={21} box="0 0 21 21"><path d="M1 1h19v19H1zM1 4h19M1 9h19M1 14.500h19M7.500 4v16M13.500 4v16" stroke={g} strokeWidth="1.500" /></Icon>
      </button>
      <button aria-label="Model view" className="flex h-[52px] items-center pl-[13px]">
        <Icon size={25} box="0 0 25 25"><path d="M1 8h9v10H1zM1 12h9M14 2h10v9H14zM14 5.500h10M14 14h10v10H14zM14 17.500h10M6 8V5h8M6 18v3h8" stroke={g} strokeWidth="1.500" /></Icon>
      </button>
      <button aria-label="DAX query view" className="flex h-[50px] items-center pl-[12px]">
        <Icon size={24} box="0 0 24 24"><path d="M7 13V3q0-2 2-2h6l5 5v13q0 2-2 2h-1M14 1v6h6M22 8v12q0 2-2 2" stroke={g} strokeWidth="1.400" /><text x="0" y="22" fontSize="8.500" fontWeight="700" fill={g} fontFamily="Open Sans">DAX</text></Icon>
      </button>
    </nav>
  );
}

/* ---------- Report charts ---------- */

function point(fraction: number, r: number) {
  const a = fraction * 2 * Math.PI;
  return `${(r * Math.sin(a)).toFixed(2)} ${(-r * Math.cos(a)).toFixed(2)}`;
}

function slice(from: number, to: number, outer: number, inner: number) {
  const big = to - from > 0.5 ? 1 : 0;
  return `M${point(from, outer)}A${outer} ${outer} 0 ${big} 1 ${point(to, outer)}L${point(to, inner)}A${inner} ${inner} 0 ${big} 0 ${point(from, inner)}Z`;
}

function Legend({ title, items }: { title: string; items: [string, string][] }) {
  return (
    <div className="text-[11px] text-[#605e5c]">
      <div className="leading-4 font-bold">{title}</div>
      <ul>
        {items.map(([name, color]) => (
          <li key={name} className="flex h-[23px] items-center gap-[2px]">
            <Icon size={10} box="0 0 10 10"><circle cx="5" cy="5" r="4.700" fill={color} /></Icon>
            {name}
          </li>
        ))}
      </ul>
    </div>
  );
}

function Report() {
  return (
    <main className="min-w-0 flex-1 overflow-hidden bg-white pt-[5px] pl-[2px]">
      <section>
        <h2 className="pl-[12px] text-lg leading-7 whitespace-nowrap text-[#252423]">Do customers with different subscription types have different churn rates?</h2>
        <h3 className="pl-[12px] font-['Roboto',sans-serif] text-[15px] leading-6 text-[#252423]">churn rate by Subscription Type</h3>
        <div className="grid grid-cols-2">
          <div className="flex items-center gap-[36px] pt-[9px] pl-[12px]">
            <svg width="260" height="210" viewBox="-147 -104 260 210" role="img" aria-label="Churn rate by subscription type" className="shrink-0" fontSize="10" fill="#605e5c">
              <path d={slice(0, 0.3418, 81, 0)} fill="#e66c37" />
              <path d={slice(0.3418, 0.6713, 81, 0)} fill="#118dff" />
              <path d={slice(0.6713, 1, 81, 0)} fill="#12239e" />
              <path d="M-55-80h10l5 8M43-72l4-8h12M-14 91h11v-8" fill="none" stroke="#b3b0ad" />
              <text x="-59" y="-82" textAnchor="end">55.94%</text>
              <text x="-59" y="-68" textAnchor="end">(32.87%)</text>
              <text x="62" y="-81">58.18%</text>
              <text x="62" y="-67">(34.18%)</text>
              <text x="-18" y="95" textAnchor="end">56.07% (32.95%)</text>
            </svg>
            <Legend title="Subscription Type" items={[["Basic", "#e66c37"], ["Standard", "#118dff"], ["Premium", "#12239e"]]} />
          </div>
          <p className="mt-[51px] pr-[12px] text-center text-base leading-6 text-[#252423]">
            <strong className="text-lg leading-6 font-bold">Subscription Types</strong> have<br />equal values
          </p>
        </div>
      </section>
      <section className="mt-4">
        <h2 className="pl-[12px] text-lg leading-7 text-[#252423]">Overall Churn Rate</h2>
        <h3 className="mt-[6px] pl-[12px] font-['Roboto',sans-serif] text-[15px] leading-[22px] text-[#252423]">Sum of Total Spend by Churn (groups)</h3>
        <div className="grid grid-cols-2">
          <div className="flex items-center gap-[31px] pt-[43px] pl-[12px]">
            <svg width="280" height="200" viewBox="-155 -100 280 200" role="img" aria-label="Sum of total spend by churn" className="shrink-0" fontSize="10" fill="#605e5c">
              <path d={slice(0, 0.514, 95, 57)} fill="#118dff" />
              <path d={slice(0.514, 1, 95, 57)} fill="#12239e" />
              <path d="M-85-77h11l8 8M64 73l7 7h11" fill="none" stroke="#b3b0ad" />
              <text x="-89" y="-80" textAnchor="end">135M</text>
              <text x="-89" y="-65" textAnchor="end">(48.6%)</text>
              <text x="85" y="78">143M</text>
              <text x="85" y="92">(51.4%)</text>
            </svg>
            <Legend title="Churn (groups)" items={[["UN-Churned", "#118dff"], ["Churned", "#12239e"]]} />
          </div>
          <p className="mt-[3px] pr-[12px] text-center text-lg leading-[26px] font-bold text-[#252423]">
            A high percentage of<br />our customer are<br />churning out
          </p>
        </div>
      </section>
      <div className="mt-[65px] border-t-2 border-dotted border-[#605e5c]" />
    </main>
  );
}

function Chevrons() {
  return <Icon w={18} h={18} box="0 0 18 18"><path d="m2 2 7 7-7 7M9 2l7 7-7 7" stroke="#252423" strokeWidth="1.500" /></Icon>;
}

function FilterGroup({ title }: { title: string }) {
  return (
    <div>
      <div className="flex items-center justify-between pr-[14px] text-sm leading-5 text-[#252423]">
        <h3>{title}</h3>
        <button aria-label={`${title} options`}>. . .</button>
      </div>
      <div className="mt-[11px] mr-[10px] flex h-[58px] items-center justify-center rounded-sm border border-[#c8c6c4] pt-[2px] text-sm text-[#252423]">Add data fields here</div>
    </div>
  );
}

function Filters() {
  return (
    <aside className="w-[251px] shrink-0 border-l border-[#b3b0ad] bg-white">
      <div className="flex h-[101px] flex-col border-b border-[#b3b0ad] pt-[11px] pl-[10px]">
        <div className="flex h-[28px] items-center pr-[11px] pl-[4px]">
          <Icon size={22} box="0 0 22 22"><path d="M1 2h20l-7.500 9v9h-5v-9z" stroke="#252423" strokeWidth="1.600" /></Icon>
          <h2 className="ml-[9px] text-[17px] font-semibold text-[#252423]">Filters</h2>
          <button aria-label="Show or hide the filter pane" className="mr-[20px] ml-auto"><Icon size={17} box="0 0 17 17"><path d="M1 9c2-7 13-7 15 0" stroke="#252423" strokeWidth="1.400" /><circle cx="8.500" cy="9.500" r="2.500" stroke="#252423" strokeWidth="1.400" /></Icon></button>
          <button aria-label="Collapse filters"><Chevrons /></button>
        </div>
        <label className="mt-[18px] mr-[15px] flex h-[38px] items-center border border-[#a19f9d] pl-[12px]">
          <Icon size={22} box="0 0 22 22"><circle cx="13" cy="8" r="6" stroke="#323130" strokeWidth="1.300" /><path d="m9 12-7 8" stroke="#323130" strokeWidth="1.300" /></Icon>
          <input aria-label="Search filters" placeholder="Search" className="ml-[15px] w-full min-w-0 bg-transparent text-[15px] text-[#252423] outline-none placeholder:text-[#252423]" />
        </label>
      </div>
      <div className="flex flex-col gap-[33px] pt-[21px] pl-[10px]">
        <FilterGroup title="Filters on this page" />
        <FilterGroup title="Filters on all pages" />
      </div>
    </aside>
  );
}

function Toggle({ label, on }: { label: string; on: boolean }) {
  return (
    <label className="flex h-[34px] items-center justify-between pr-[22px] pl-[10px] text-sm text-[#252423]">
      {label}
      <input type="checkbox" role="switch" defaultChecked={on} className="sr-only" />
      {on ? (
        <span className="flex h-5 w-10 items-center justify-between rounded-full bg-[#117865] pr-[6px] pl-[6px] text-[11px] leading-5 text-white">On<i className="size-[10px] rounded-full bg-white" /></span>
      ) : (
        <span className="flex h-5 w-10 items-center justify-between rounded-full border border-[#8a8886] bg-white pr-[5px] pl-[5px] text-[11px] leading-5 text-[#605e5c]"><i className="size-[10px] rounded-full bg-[#605e5c]" />Off</span>
      )}
    </label>
  );
}

function Visualizations() {
  return (
    <aside className="w-[226px] shrink-0 border-l border-[#e1dfdd] bg-[#f3f2f1] text-[#252423]">
      <div className="flex items-center justify-between pt-[11px] pr-[9px] pl-[10px]">
        <h2 className="text-[17px] leading-7 font-semibold">Visualizations</h2>
        <button aria-label="Collapse visualizations"><Chevrons /></button>
      </div>
      <h3 className="mt-[9px] pl-[10px] text-sm leading-5 font-semibold">Build visual</h3>
      <div className="mt-[4px] flex pl-[10px]">
        <button aria-label="Build visual" className="flex size-10 items-center justify-center rounded-sm bg-[#d2d0ce]">
          <Icon size={32} box="0 0 32 32"><path d="M1 2h24" stroke="#201f1e" strokeWidth="2" /><path d="M2 9h28v8H2zM2 22h28v8H2z" fill="#117865" /><path d="M2 9h28v8H2zM2 22h28v8H2z" stroke="#201f1e" strokeWidth="1.600" strokeDasharray="2.500 1.500" /></Icon>
        </button>
        <button aria-label="Format visual" className="ml-[43px] flex size-10 items-center justify-center">
          <Icon size={32} box="0 0 32 32"><path d="M11 31H2V1h13l8 9v2M15 1v9h7" stroke="#201f1e" strokeWidth="1.600" /><path d="m30 11-2 8-9 11c-3 2-6 2-8 1 3-1 2-6 6-8l8-9z" fill={W} stroke="#201f1e" strokeWidth="1.500" /><path d="m17 23 4 4" stroke="#201f1e" /></Icon>
        </button>
      </div>
      <svg width="225" height="12" viewBox="0 0 225 12" fill="none" className="mt-[5px] block" aria-hidden="true"><path d="M0 10.500h20l10-9 10 9h185" stroke="#8a8886" strokeWidth="1.300" /></svg>
      <div className="mt-[6px] grid grid-cols-[repeat(6,35px)] pl-[8px]">
        {visuals.map((v) => (
          <button key={v.name} aria-label={v.name} title={v.name} className="flex h-[35px] items-center justify-center">
            <Icon size={24} box="-0.500 -0.500 24 24">{v.art}</Icon>
          </button>
        ))}
      </div>
      <button aria-label="More visuals" className="mt-[1px] block h-[20px] pl-[15px] text-base leading-4 font-semibold">. . .</button>
      <div className="mt-[20px] border-t border-[#d8d6d4] px-[5px] pt-[12px]">
        <h4 className="pl-[10px] text-sm leading-5">Values</h4>
        <div className="mt-[6px] mr-[2px] flex h-[35px] items-center rounded-sm border border-dashed border-[#c8c6c4] bg-white pl-[13px] text-sm">Add data fields here</div>
        <h4 className="mt-[14px] mb-[4px] pl-[10px] text-sm leading-5 font-semibold text-[#484644]">Drill through</h4>
        <Toggle label="Cross-report" on={false} />
        <Toggle label="Keep all filters" on />
        <div className="mt-[6px] mr-[2px] flex h-[33px] items-center rounded-sm border border-dashed border-[#c8c6c4] bg-white pl-[10px] text-sm whitespace-nowrap">Add drill-through fields here</div>
      </div>
    </aside>
  );
}

function DataPane() {
  return (
    <aside className="w-[226px] shrink-0 border-l border-[#e1dfdd] bg-[#f3f2f1] text-[#252423]">
      <div className="flex items-center justify-between pt-[11px] pr-[9px] pl-[10px]">
        <h2 className="text-[17px] leading-7 font-semibold">Data</h2>
        <button aria-label="Collapse data"><Chevrons /></button>
      </div>
      <label className="mx-[5px] mt-[18px] flex h-[31px] items-center rounded border border-[#d1d1d1] border-b-[#616161] bg-white pl-[13px]">
        <Icon size={20} box="0 0 20 20"><circle cx="8.500" cy="8.500" r="6.500" stroke="#616161" strokeWidth="1.300" /><path d="m13 13 6 6" stroke="#616161" strokeWidth="1.300" /></Icon>
        <input aria-label="Search data" placeholder="Search" className="ml-[9px] w-full min-w-0 bg-transparent text-[15px] outline-none placeholder:text-[#616161]" />
      </label>
      <button className="mt-[14px] ml-[19px] flex h-[24px] items-center text-sm">
        <Icon w={10} h={16} box="0 0 10 16"><path d="m1 1 7 7-7 7" stroke="#484644" strokeWidth="1.300" /></Icon>
        <Icon size={17} box="0 0 17 17" className="mr-[6px] ml-[7px]"><rect x="1" y="1" width="15" height="15" rx="3" stroke="#252423" strokeWidth="1.500" /><path d="M1 6h15M1 11h15M6 1v15M11 1v15" stroke="#252423" strokeWidth="1.400" /></Icon>
        ChurnOut
      </button>
    </aside>
  );
}

function PageTabs() {
  const pages = ["Page 1", "Page 2", "Page 3", "Page 4", "Page 5", "Page 6", "Page 7"];
  return (
    <div className="flex h-[44px] shrink-0 bg-[#f3f2f1] text-sm text-[#252423]">
      <div className="flex w-[160px] shrink-0 border-r border-[#a19f9d]">
        <button aria-label="Desktop layout" className="ml-[12px] flex h-[38px] w-[30px] flex-col items-center border-b-[3px] border-[#117865] pt-[8px]">
          <Icon w={26} h={20} box="0 0 26 20"><path d="M1.500 1h23v14h-23zM13 15v4M8 19h10" stroke="#605e5c" strokeWidth="1.600" /></Icon>
        </button>
        <button aria-label="Mobile layout" className="ml-[31px] flex h-[38px] pt-[5px]">
          <Icon w={17} h={27} box="0 0 17 27"><rect x="1" y="1" width="15" height="24" rx="1.500" stroke="#605e5c" strokeWidth="1.600" /><path d="M7 22h3" stroke="#605e5c" strokeWidth="2" /></Icon>
        </button>
        <button aria-label="Previous page" className="ml-[26px]"><Icon w={7} h={11} box="0 0 7 11"><path d="M7 0v11L0 5.500z" fill="#c8c6c4" /></Icon></button>
        <button aria-label="Next page" className="ml-[21px]"><Icon w={7} h={11} box="0 0 7 11"><path d="M0 0v11l7-5.500z" fill="#c8c6c4" /></Icon></button>
      </div>
      {pages.map((p) =>
        p === "Page 6" ? (
          <div key={p} className="relative flex border-r border-[#d2d0ce] bg-white">
            <button className="w-[96px] border-b-[5px] border-[#117865] pt-[6px] font-semibold">{p}</button>
            <button aria-label="Delete page" className="absolute top-[2px] right-[5px] text-xs leading-5 font-semibold">x</button>
          </div>
        ) : (
          <button key={p} className="w-[95px] border-r border-[#c8c6c4] bg-white pt-[2px] odd:w-[96px]">{p}</button>
        )
      )}
      <button className="w-[160px] bg-white pt-[2px]">Recomendations</button>
      <button aria-label="New page" className="flex w-[50px] items-center justify-center bg-[#117865] pb-[3px]">
        <Icon size={14} box="0 0 14 14"><path d="M7 0v14M0 7h14" stroke="#fff" strokeWidth="3.200" /></Icon>
      </button>
    </div>
  );
}

function StatusBar() {
  return (
    <footer className="flex h-[28px] shrink-0 items-center border-t border-[#e1dfdd] bg-[#f3f2f1] pl-[5px] text-sm text-[#484644]">
      <span className="pt-[3px]">Page 6 of 8</span>
      <button aria-label="Zoom out" className="ml-auto text-base leading-5 font-semibold">-</button>
      <input
        type="range"
        min={10}
        max={190}
        defaultValue={72}
        aria-label="Zoom"
        className="mx-[6px] h-[15px] w-[126px] appearance-none bg-[linear-gradient(#605e5c,#605e5c),linear-gradient(#605e5c,#605e5c)] bg-[length:100%_1px,1px_8px] bg-center bg-no-repeat [&::-webkit-slider-thumb]:h-[14px] [&::-webkit-slider-thumb]:w-[5px] [&::-webkit-slider-thumb]:appearance-none [&::-webkit-slider-thumb]:bg-[#605e5c]"
      />
      <button aria-label="Zoom in" className="text-lg leading-5 font-semibold">+</button>
      <span className="ml-[17px] text-[#605e5c]">73%</span>
      <button aria-label="Fit to page" className="mr-[22px] ml-[22px]">
        <Icon w={22} h={17} box="0 0 22 17"><path d="M1 1h20v15H1z" stroke="#797775" strokeWidth="1.600" /><path d="M4 7V4h4M14 4h4v3M18 10v3h-4M8 13H4v-3" stroke="#605e5c" strokeWidth="1.500" /></Icon>
      </button>
    </footer>
  );
}

/* ---------- Taskbar ---------- */

function ChromeArt() {
  return (
    <>
      <circle cx="15" cy="15" r="15" fill="#f9c31c" />
      <path d="M2 7.500A15 15 0 0 1 28 7.500H15A7.500 7.500 0 0 0 8.500 18.700z" fill="#e23b2e" />
      <path d="M2 7.500A15 15 0 0 0 14 30l7.500-11.300A7.500 7.500 0 0 1 8.500 18.700z" fill="#2c9f4b" />
      <circle cx="15" cy="15" r="7.300" fill="#fff" />
      <circle cx="15" cy="15" r="5.700" fill="#2f7de9" />
    </>
  );
}

const apps: { name: string; run?: boolean; active?: boolean; badge?: string; badgeText?: string; art: React.ReactNode }[] = [
  { name: "Task view", art: <><rect x="0" y="9" width="21" height="20" rx="1" fill="#666" /><rect x="8" y="1" width="22" height="20" rx="1" fill="#f4f4f4" /><path d="M8 9h13v12H8z" fill="#c4c4c4" /></> },
  { name: "Edge", art: <><circle cx="15" cy="15" r="15" fill="#1479cf" /><path d="M1 11C3 4 9 0 15 0c9 0 15 6 15 13 0 5-4 7-8 7-3 0-5-1-4-2 3-4 0-10-6-10-5 0-9 2-11 3z" fill="#35b8e6" /><path d="M21 2c6 2 9 7 9 11 0 5-4 7-8 7-3 0-5-1-4-2 3-4 4-10 3-16z" fill="#5fd07c" /><path d="M12 10c-5 3-6 14 4 18 5 1 10-2 12-5-5 2-13 2-15-4-1-3 1-5 2-6 0-2-1-3-3-3z" fill="#0c4a94" /></> },
  { name: "File Explorer", run: true, art: <><path d="M0 2h11l4 4h15v6H0z" fill="#e09a14" /><path d="M0 8h30v20H0z" fill="#ffd257" /><path d="M5 29v-5q0-3 3-3h14q3 0 3 3v5z" fill="#1673c5" /><path d="M9 25h12" stroke="#0b4f91" strokeWidth="2" /></> },
  { name: "Spotify", run: true, art: <><circle cx="15" cy="15" r="13" fill="#17261c" /><FaSpotify size={30} color="#1ed760" /></> },
  { name: "WhatsApp", art: <FaWhatsapp size={30} color="#25d366" /> },
  { name: "Chrome", art: <ChromeArt /> },
  { name: "PyCharm", art: <><path d="m2 6 10-5 10 1 7 9-1 14-9 5-15-2z" fill="#21d789" /><path d="m17 9 12 2-1 15-10 3z" fill="#fcf84a" /><path d="m22 8 8 3-4 5z" fill="#07c3f2" /><rect x="6" y="6" width="18" height="19" fill="#000" /><text x="8" y="16" fontSize="10" fontWeight="700" fill="#fff" fontFamily="Open Sans">PC</text><path d="M8 22h8" stroke="#fff" strokeWidth="1.500" /></> },
  { name: "Discord", art: <><circle cx="15" cy="15" r="15" fill="#5865f2" /><svg x="6" y="6"><FaDiscord size={18} color="#fff" /></svg></> },
  { name: "VMware", run: true, art: <><rect x="12" y="2" width="16" height="17" rx="2" stroke="#1488d8" strokeWidth="4" /><rect x="2" y="11" width="17" height="17" rx="2" stroke="#f08c0f" strokeWidth="4.500" /><path d="M12 13v6h5" stroke="#1488d8" strokeWidth="4" /></> },
  { name: "Chrome profile e", run: true, badge: "bg-[#b7341b]", badgeText: "e", art: <ChromeArt /> },
  { name: "Chrome profile E", run: true, badge: "bg-[#145497]", badgeText: "E", art: <ChromeArt /> },
  { name: "Power BI Desktop", active: true, art: <><path d="M16 0h10v30H16z" fill="#e09a14" /><path d="M9 7h10v23H9z" fill="#f5c52c" /><path d="M3 15h10v15H3z" fill="#ffe07a" /></> },
];

function Taskbar() {
  return (
    <footer className="flex h-[62px] shrink-0 items-center border-t border-black bg-[#1c2123] pt-[1px] text-white">
      <button className="flex w-[20%] items-center pl-[28px] text-left">
        <span className="relative">
          <Icon w={28} h={36} box="0 0 28 36"><circle cx="12" cy="18" r="12" fill="#f4a51c" /><path d="M7 34a6 6 0 0 1-1-12c2-7 12-8 14-1 9 0 9 13 0 13z" fill="#c9ddf6" /></Icon>
          <span className="absolute -top-[3px] left-[11px] size-5 rounded-full bg-[#ff99a4] text-center text-xs leading-5 text-black">1</span>
        </span>
        <span className="ml-[8px] flex flex-col text-sm leading-[22px]">
          <span>25°C</span>
          <span dir="rtl" className="font-['DejaVu_Sans',sans-serif] text-sm leading-[22px] text-[#c8c8c8]">مشمس جزئيًا</span>
        </span>
      </button>
      <div className="flex items-center">
        <button aria-label="Start" className="flex w-[57px] justify-center">
          <Icon size={30} box="0 0 30 30"><path d="M0 0h14v14H0zM15.500 0H29.500v14H15.500zM0 15.500h14v14h-14zM15.500 15.500h14v14h-14z" fill="#3cbcf8" /><path d="M0 0h14v14H0z" fill="#6ad8fb" /></Icon>
        </button>
        <label className="ml-[3px] flex h-[40px] w-[275px] items-center rounded-full border border-[#55595b] bg-[#3b4042] pl-[14px]">
          <Icon size={20} box="0 0 20 20"><circle cx="8.500" cy="8.500" r="7" stroke="#e6e6e6" strokeWidth="2" /><path d="m13 14 5 5" stroke="#e6e6e6" strokeWidth="2.400" /></Icon>
          <input aria-label="Search Windows" placeholder="Search" className="ml-[11px] w-[100px] bg-transparent text-base outline-none placeholder:text-[#d6d6d6]" />
          <Icon w={58} h={32} box="0 0 58 32" className="mr-[8px] ml-auto">
            <path d="M2 12c6-2 8 3 14 1M8 20c4-6 8 0 12-3M4 17l9-6M16 28c-1-8-5-9-10-12M24 31c1-9-3-12-9-14M30 30c0-8 5-10 8-18M38 29c4-5 3-13 7-18M44 31c2-8 6-10 10-6M46 15c-2-6 0-10 3-14 4 6 2 10-2 14M47 27c6 2 9-2 9-8" stroke="#c9ab35" strokeWidth="2.500" />
            <path d="M11 29c2-5 1-10-2-14M20 29c2-6 6-6 6-12M34 31c-2-7 4-8 5-14M42 27c0-5 4-7 6-13M27 21l6 9" stroke="#6d8f4a" strokeWidth="2.500" />
            <path d="m10 2 9 5 3 2 4-3 5-4-3 8-6 4-5-1-3-6z" fill="#4792da" />
            <path d="m14 11 3 7M39 5l3 5" stroke="#f0d04b" strokeWidth="2" />
          </Icon>
        </label>
        <div className="ml-[2px] flex">
          {apps.map((a) => (
            <button key={a.name} aria-label={a.name} className="flex w-[55px] justify-center">
              <span className={a.active ? "relative flex h-[51px] w-[49px] items-center justify-center rounded-md border border-[#3a3f41] bg-[#2d3234]" : "relative flex h-[51px] w-[49px] items-center justify-center"}>
                <Icon size={30} box="0 0 30 30">{a.art}</Icon>
                {a.badge && <span className={`${a.badge} absolute top-[4px] right-[1px] size-5 rounded-full text-center text-xs leading-5 text-[#dce6f0]`}>{a.badgeText}</span>}
                {a.run && <span className="absolute bottom-[1px] h-1 w-2 rounded-full bg-[#9a9a9a]" />}
                {a.active && <span className="absolute bottom-0 h-1 w-5 rounded-full bg-[#44c0f5]" />}
              </span>
            </button>
          ))}
        </div>
      </div>
      <div className="ml-auto flex items-center pr-[24px] text-sm">
        <button aria-label="Show hidden icons"><Icon size={16} box="0 0 16 16"><path d="m2 11 6-6 6 6" stroke="#fff" strokeWidth="1.900" /></Icon></button>
        <button aria-label="OneDrive" className="ml-[21px]"><Icon size={22} box="0 0 22 22"><path d="M5 15a4.500 4.500 0 0 1 0-9C7 1 14 1 16 6c6 0 6 9 0 9z" fill="#bdbdbd" /><circle cx="15" cy="15" r="6" fill="#fff" /><path d="M11.500 15a3.500 3.500 0 0 1 6-2.500M18.500 15a3.500 3.500 0 0 1-6 2.500" stroke="#1a7bd0" strokeWidth="1.700" /></Icon></button>
        <button aria-label="Update" className="ml-[18px]"><Icon size={22} box="0 0 22 22"><path d="M2 10a9 9 0 0 1 17-3V2m0 6h-5M8 21H3l-1-5m1 5 4-4" stroke="#fff" strokeWidth="1.400" /><circle cx="16" cy="16" r="5" fill="#f59b13" /></Icon></button>
        <button className="ml-[22px]">ENG</button>
        <button aria-label="Wi-Fi" className="ml-[22px]"><Icon size={21} box="0 0 21 21"><path d="M1 8c5-6 14-6 19 0M4 11c4-4 9-4 13 0M7 14c2-2 5-2 7 0" stroke="#fff" strokeWidth="1.700" /><circle cx="10.500" cy="16.500" r="1.800" fill="#fff" /></Icon></button>
        <button aria-label="Volume" className="ml-[9px]"><Icon size={21} box="0 0 21 21"><path d="M1 7.500h4l5-4.500v15l-5-4.500H1z" stroke="#fff" strokeWidth="1.500" /><path d="M13 7c2 2 2 5 0 7M15.500 4.500c4 4 4 8 0 12M18 2c4 5 4 12 0 17" stroke="#fff" strokeWidth="1.300" /></Icon></button>
        <button aria-label="Battery" className="ml-[9px]"><Icon size={21} box="0 0 21 21"><rect x="1" y="5" width="16.500" height="11" rx="2.500" stroke="#fff" strokeWidth="1.500" /><path d="M3.500 7.500h9v6h-9z" fill="#fff" /><path d="M19 8.500v4" stroke="#fff" strokeWidth="2" /></Icon></button>
        <button className="ml-[25px] text-right leading-5">4:12 PM<br />11/13/2024</button>
        <button aria-label="Notifications" className="ml-[9px]"><Icon size={20} box="0 0 20 20"><path d="M3 15V9c0-8 11-8 11 0v6l2 2H1zM6 18h5l-2.500 2z" fill="#fff" /><path d="M6 7.500h4l-4 5h4" stroke="#1c2123" strokeWidth="1.500" /><path d="M12 0h8v8h-6z" fill="#1c2123" /><path d="M14 1h4l-4 5h4" stroke="#fff" strokeWidth="1.400" /></Icon></button>
        <button aria-label="Copilot" className="relative ml-[19px]">
          <Icon size={30} box="0 0 41 40"><CopilotArt id="tb" /></Icon>
          <span className="absolute -right-[1px] bottom-0 rounded-sm bg-[#fcbf17] px-[3px] text-[9px] leading-[10px] font-bold text-black">PRE</span>
        </button>
      </div>
    </footer>
  );
}

function Watermark() {
  return (
    <div aria-hidden="true" className="pointer-events-none absolute bottom-[23px] left-1/2 z-20 flex -translate-x-1/2 flex-col items-center">
      <span dir="rtl" className="font-['DejaVu_Sans',sans-serif] text-[66px] leading-[72px] font-bold text-[#c4c4c4]/50">مستقل</span>
      <span className="font-['Lato',sans-serif] text-[42px] leading-[42px] font-bold text-[#969696]/70">mostaql.com</span>
    </div>
  );
}

export default function App() {
  return (
    <div className="relative flex h-screen flex-col overflow-hidden bg-[#f3f2f1] font-['Open_Sans',sans-serif]">
      <TitleBar />
      <Ribbon />
      <div className="flex min-h-0 flex-1">
        <Rail />
        <div className="flex min-w-0 flex-1 flex-col">
          <div className="flex min-h-0 flex-1">
            <Report />
            <Filters />
          </div>
          <PageTabs />
        </div>
        <Visualizations />
        <DataPane />
      </div>
      <StatusBar />
      <Taskbar />
      <Watermark />
    </div>
  );
}
